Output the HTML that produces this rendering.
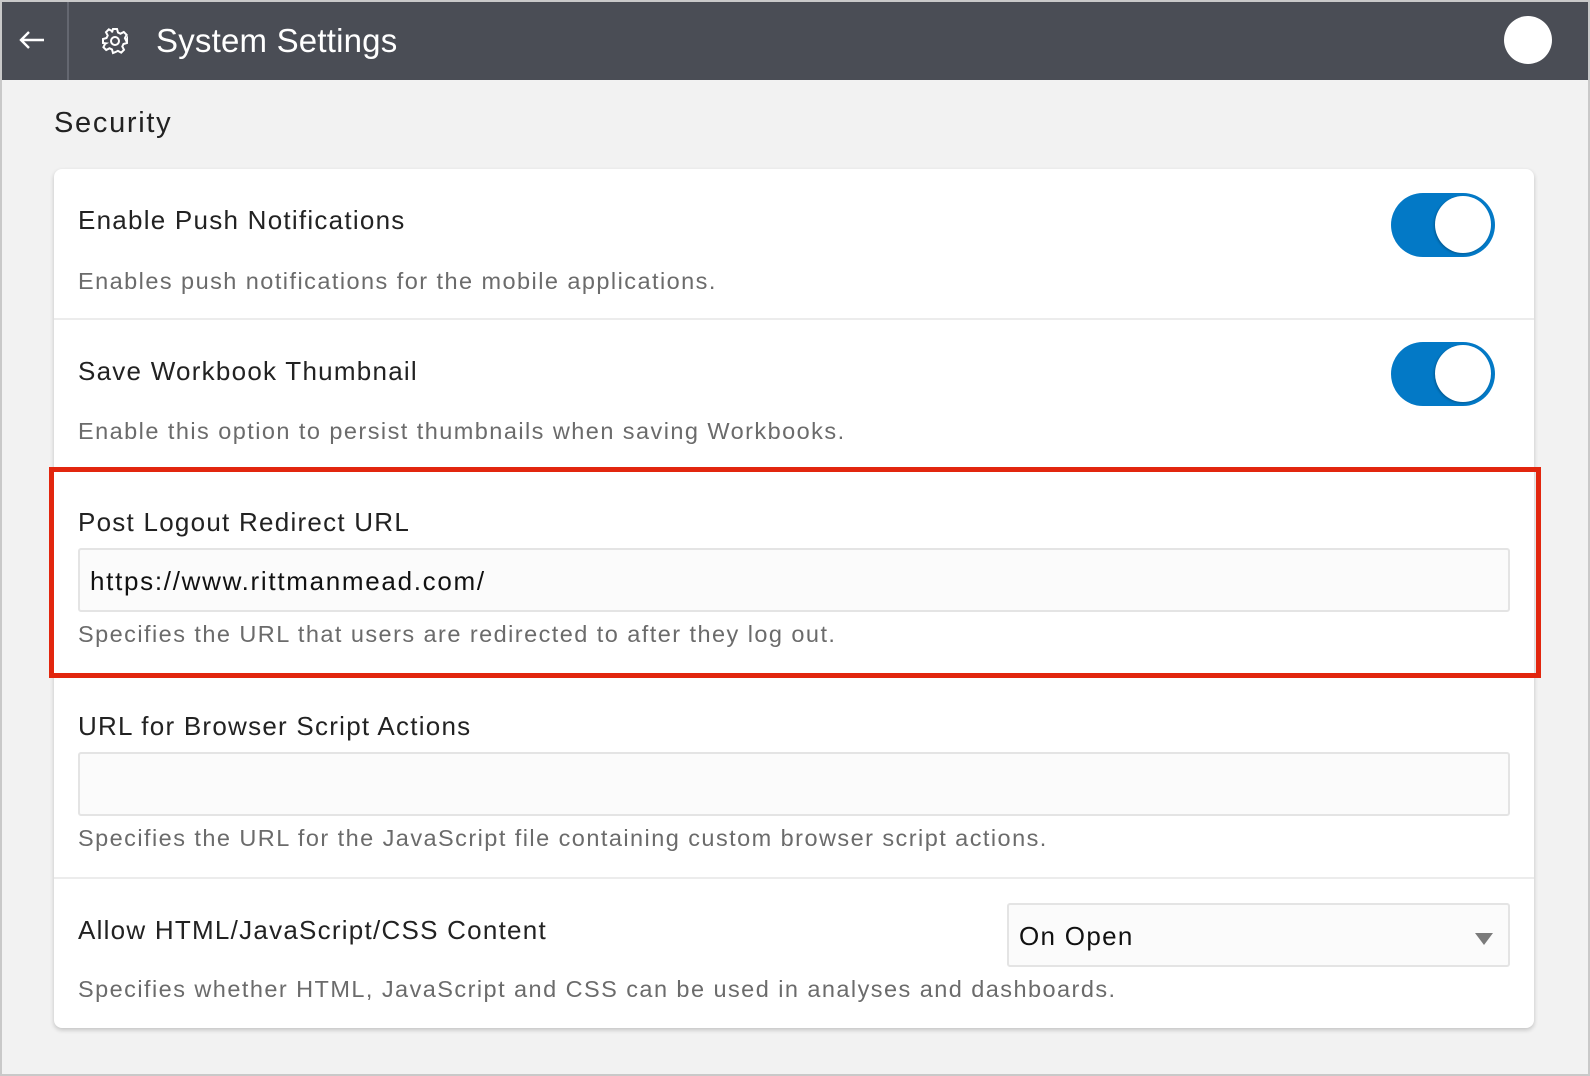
<!DOCTYPE html>
<html><head><meta charset="utf-8"><style>
*{margin:0;padding:0;box-sizing:border-box}
html,body{width:1590px;height:1076px;overflow:hidden;background:#c9c9c9;font-family:"Liberation Sans",sans-serif}
#frame{position:absolute;left:2px;top:2px;width:1586px;height:1072px;background:#f2f2f2;overflow:hidden}
.a{position:absolute;white-space:nowrap;line-height:1}
.t{font-size:26px;color:#222;letter-spacing:1.25px}
.d{font-size:23.5px;color:#6b6b6b;letter-spacing:1.45px}
.inp{position:absolute;background:#fbfbfb;border:2px solid #e4e4e4;border-radius:3px}
.tog{position:absolute;width:104px;height:64px;border-radius:32px;background:#0379c6}
.tog:after{content:"";position:absolute;right:4px;top:3px;width:56px;height:57px;border-radius:50%;background:#fff;box-shadow:-1px 1px 2px rgba(0,0,0,.25)}
.sep{position:absolute;left:52px;width:1480px;height:2px;background:#ececec}
</style></head><body>
<div id="frame">
<div style="position:absolute;left:0;top:0;width:1586px;height:78px;background:#4a4d55"></div>
<div style="position:absolute;left:65px;top:0;width:2px;height:78px;background:#646770"></div>
<svg style="position:absolute;left:16px;top:28px" width="28" height="20" viewBox="0 0 28 20"><path d="M26 10H3M11 2L3 10l8 8" stroke="#fff" stroke-width="2.4" fill="none"/></svg>
<svg style="position:absolute;left:99px;top:25px" width="28" height="28" viewBox="0 0 28 28"><g fill="none" stroke="#fff" stroke-width="2"><path d="M12 2h4l1 3.5 2.5 1.2 3.3-1.7 2.8 2.8-1.7 3.3 1.2 2.5L26 12v4l-3.5 1-1.2 2.5 1.7 3.3-2.8 2.8-3.3-1.7-2.5 1.2L12 26h0l-1-3.5-2.5-1.2-3.3 1.7-2.8-2.8 1.7-3.3L5 16.4 2 16v-4l3.5-1 1.2-2.5-1.7-3.3 2.8-2.8 3.3 1.7L11 5.5z"/><circle cx="14" cy="14" r="4"/></g></svg>
<div class="a" style="left:154px;top:22px;font-size:33px;color:#fff;letter-spacing:0.2px">System Settings</div>
<div style="position:absolute;left:1502px;top:14px;width:48px;height:48px;border-radius:50%;background:#fff"></div>
<div class="a" style="left:52px;top:107px;font-size:29px;color:#222;letter-spacing:1.7px">Security</div>
<div style="position:absolute;left:52px;top:167px;width:1480px;height:859px;background:#fff;border-radius:8px;box-shadow:0 2px 5px rgba(0,0,0,.2)"></div>
<div class="sep" style="top:316px"></div>
<div class="sep" style="top:875px"></div>
<div class="a t" style="left:76px;top:205px">Enable Push Notifications</div>
<div class="a d" style="left:76px;top:268px">Enables push notifications for the mobile applications.</div>
<div class="tog" style="left:1389px;top:191px"></div>
<div class="a t" style="left:76px;top:356px">Save Workbook Thumbnail</div>
<div class="a d" style="left:76px;top:418px">Enable this option to persist thumbnails when saving Workbooks.</div>
<div class="tog" style="left:1389px;top:340px"></div>
<div style="position:absolute;left:47px;top:465px;width:1492px;height:211px;border:5px solid #e2260e"></div>
<div class="a t" style="left:76px;top:507px">Post Logout Redirect URL</div>
<div class="inp" style="left:76px;top:546px;width:1432px;height:64px"></div>
<div class="a" style="left:88px;top:566px;font-size:26px;color:#111;letter-spacing:1.7px">https://www.rittmanmead.com/</div>
<div class="a d" style="left:76px;top:621px">Specifies the URL that users are redirected to after they log out.</div>
<div class="a t" style="left:76px;top:711px">URL for Browser Script Actions</div>
<div class="inp" style="left:76px;top:750px;width:1432px;height:64px"></div>
<div class="a d" style="left:76px;top:825px">Specifies the URL for the JavaScript file containing custom browser script actions.</div>
<div class="a t" style="left:76px;top:915px">Allow HTML/JavaScript/CSS Content</div>
<div class="inp" style="left:1005px;top:901px;width:503px;height:64px"></div>
<div class="a" style="left:1017px;top:921px;font-size:26px;color:#111;letter-spacing:1.3px">On Open</div>
<svg style="position:absolute;left:1472px;top:930px" width="20" height="14"><path d="M1 1h18l-9 12z" fill="#7b7b7b"/></svg>
<div class="a d" style="left:76px;top:976px">Specifies whether HTML, JavaScript and CSS can be used in analyses and dashboards.</div>
</div>
</body></html>
